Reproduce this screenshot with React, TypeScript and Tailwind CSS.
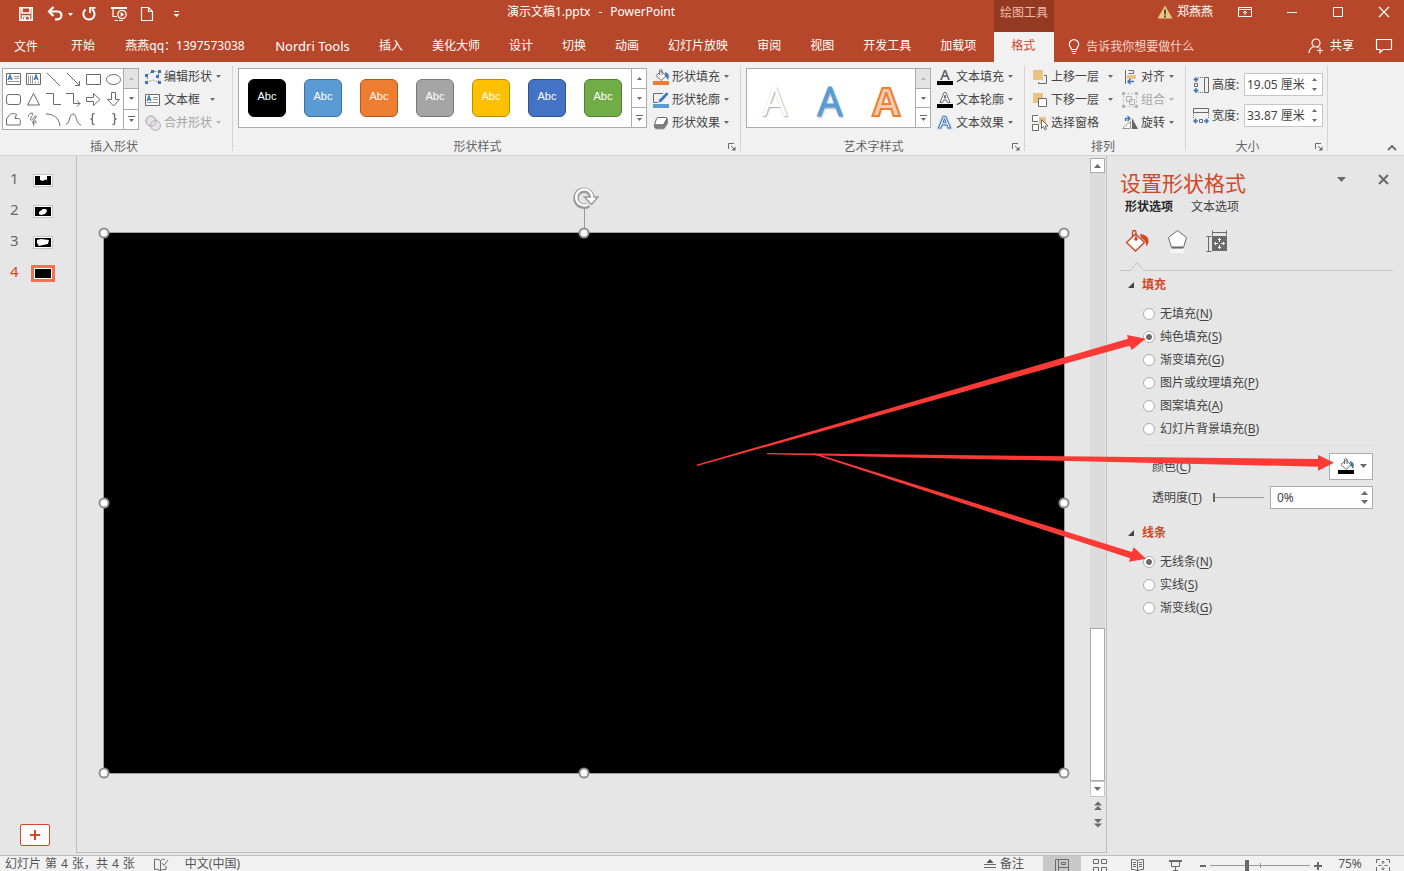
import React from "react";

type Kids = { children?: React.ReactNode };

const Ico = ({ w = 16, h = 16, children }: Kids & { w?: number; h?: number }) => (
  <svg width={w} height={h} viewBox={`0 0 ${w} ${h}`} fill="none" stroke="#6a6a6a" className="shrink-0" aria-hidden="true">
    {children}
  </svg>
);

const Caret = ({ color = "#6a6a6a", up = false }: { color?: string; up?: boolean }) => (
  <svg width="5" height="3" viewBox="0 0 5 3" className="shrink-0" aria-hidden="true">
    <path d={up ? "M0 3h5L2.5 0z" : "M0 0h5L2.5 3z"} fill={color} />
  </svg>
);

const letterA = "M1.5 13 6.3 1.5h2.4L13.5 13h-2.3l-1.2-3.2H5L3.8 13zM5.8 7.8h3.4L7.5 3.4z";

/* ---------- title bar ---------- */

function TitleBar() {
  return (
    <header className="flex h-8 shrink-0 text-white">
      <div className="flex shrink-0 items-start pt-[6px] pr-[8px] pl-[18px]">
        <button aria-label="保存"><Ico>
          <g stroke="#fff" strokeWidth="1.6"><path d="M1.8 1.8h12.4v12.4H1.8z" /><path d="M4 2v5h8V2M4.5 14v-4h7v4" /></g><path d="M6 11h2v3H6z" fill="#fff" stroke="none" />
        </Ico></button>
        <button aria-label="撤消" className="ml-[13px] flex items-center gap-[4px]">
          <Ico w={17}><path d="M2 5.500h8.500a3.900 3.900 0 0 1 0 7.800H8" stroke="#fff" strokeWidth="2.200" /><path d="M6.500 1 2 5.500l4.500 4.500" stroke="#fff" strokeWidth="2.200" /></Ico>
          <Caret color="#fff" />
        </button>
        <button aria-label="恢复" className="ml-[8px]"><Ico>
          <path d="M4.600 3.500a5.600 5.600 0 1 0 6.400-.2" stroke="#fff" strokeWidth="2" /><path d="M9 7V1.800h5.500" stroke="#fff" strokeWidth="1.800" />
        </Ico></button>
        <button aria-label="从头开始" className="ml-[13px]"><Ico w={18}>
          <g stroke="#fff" strokeWidth="1.200"><path d="M1 2h16" strokeWidth="2" /><path d="M3 3v7.500h4M8 14.500H4.500M9 14.500h4" /><circle cx="12" cy="8.500" r="4.200" /></g><path d="M10.700 6v5l3.600-2.500z" fill="#fff" stroke="none" />
        </Ico></button>
        <button aria-label="新建" className="ml-[12px]"><Ico>
          <path d="M1.500 1.500H8.500L12.500 5.500v9h-11zM8.500 1.500V5.500h4" stroke="#fff" strokeWidth="1.200" />
        </Ico></button>
        <button aria-label="自定义快速访问工具栏" className="ml-[17px]"><Ico w={7}>
          <path d="M1 5.500h5" stroke="#fff" /><path d="M.5 8h6l-3 3z" fill="#fff" stroke="none" />
        </Ico></button>
      </div>
      <h1 className="flex h-6 min-w-0 flex-1 items-center justify-center gap-[8px] text-[12px] leading-4 whitespace-nowrap">
        <span>演示文稿1.pptx</span><span>-</span><span>PowerPoint</span>
      </h1>
      <div className="flex shrink-0">
        <div className="mr-[103px] flex w-[60px] justify-center bg-[#943a22] pt-[5px] text-[12px] leading-4 text-[#f0b9a8]">绘图工具</div>
        <div className="flex h-6 items-center gap-1 text-[12px] leading-4">
          <Ico><path d="M8 1.500 15.500 14.500H.5z" fill="#efc77c" stroke="none" /><path d="M8 5.500v5M8 11.500v2" stroke="#444" strokeWidth="1.800" /></Ico>
          郑燕燕
        </div>
        <button aria-label="功能区显示选项" className="ml-[25px] h-6"><Ico w={14}><path d="M.5 3.500h13v9H.5zM.5 5.500h13M7 11V7M5 9l2-2 2 2" stroke="#fff" /></Ico></button>
        <button aria-label="最小化" className="ml-[34px] h-6"><Ico w={12}><path d="M1 8.500h10" stroke="#fff" /></Ico></button>
        <button aria-label="最大化" className="ml-[35px] h-6"><Ico w={11}><path d="M.5 3.500h9v9h-9z" stroke="#fff" /></Ico></button>
        <button aria-label="关闭" className="mr-[14px] ml-[34px] h-6"><Ico w={12}><path d="m1 3 10 10M11 3 1 13" stroke="#fff" strokeWidth="1.200" /></Ico></button>
      </div>
    </header>
  );
}

function Tabs() {
  const tab = "flex items-center justify-center px-[14px] whitespace-nowrap";
  return (
    <nav className="flex h-[30px] shrink-0 text-[12px] leading-4 text-white">
      <button className="flex items-center pr-[19px] pl-[14px]">文件</button>
      <div className="flex gap-px pb-[2px]">
        <button className={tab}>开始</button>
        <button className="flex w-[150px] items-center justify-center whitespace-nowrap">燕燕qq：1397573038</button>
        <button className="flex w-[103px] items-center justify-center text-[13px] whitespace-nowrap">Nordri Tools</button>
        {["插入", "美化大师", "设计", "切换", "动画", "幻灯片放映", "审阅", "视图", "开发工具", "加载项"].map((t) => (
          <button key={t} className={tab}>{t}</button>
        ))}
      </div>
      <button className="ml-1 w-[60px] bg-[#f1f1f1] pr-[2px] pb-[2px] text-[#d24726]">格式</button>
      <button className="flex items-center gap-1 pl-3 text-[#f7d5cb]">
        <Ico><path d="M5.500 10.500C5.500 9 3.300 8 3.300 5.300a4.700 4.700 0 0 1 9.400 0C12.700 8 10.500 9 10.500 10.500zM5.500 12.500h5M6.500 14.500h3" stroke="#fff" strokeWidth="1.200" /></Ico>
        告诉我你想要做什么
      </button>
      <button className="ml-auto flex items-center gap-[6px] pb-[2px]">
        <Ico><g stroke="#fff" strokeWidth="1.200"><circle cx="8" cy="5" r="4" /><path d="M1 15c.3-3.500 2-5.500 4.500-6.300M12 9.500v6M9 12.500h6M9.500 9l1 .7" /></g></Ico>
        共享
      </button>
      <button aria-label="批注" className="mr-[11px] ml-[21px] pb-[2px]"><Ico w={18}><path d="M1.500 1.500h15v10H8l-3 3v-3H1.500z" stroke="#fff" strokeWidth="1.200" /></Ico></button>
    </nav>
  );
}

/* ---------- ribbon ---------- */

function Scroller({ dim = false }: { dim?: boolean }) {
  return (
    <div className="flex w-[15px] shrink-0 flex-col divide-y divide-[#ababab] border-l border-[#ababab]">
      <button aria-label="上一行" className={`flex flex-1 items-center justify-center ${dim ? "bg-[#e3e3e3]" : ""}`}><Caret up color={dim ? "#b5b5b5" : "#6a6a6a"} /></button>
      <button aria-label="下一行" className="flex flex-1 items-center justify-center"><Caret /></button>
      <button aria-label="其他" className="flex flex-1 flex-col items-center justify-center gap-[2px]"><span className="h-px w-[7px] bg-[#6a6a6a]" /><Caret /></button>
    </div>
  );
}

function Cmd({ icon, text, caret = true, off = false, gap = "gap-[4px]" }: { icon: React.ReactNode; text: string; caret?: boolean; off?: boolean; gap?: string }) {
  return (
    <button disabled={off} className={`flex h-[23px] items-center whitespace-nowrap ${off ? "text-[#a6a6a6]" : "text-[#444]"}`}>
      {icon}
      <span className={`ml-[3px] flex items-center ${gap}`}>{text}{caret && <Caret color={off ? "#b5b5b5" : "#6a6a6a"} />}</span>
    </button>
  );
}

function Group({ label, w, launcher, children }: Kids & { label: string; w: string; launcher?: boolean }) {
  return (
    <section className={`flex shrink-0 flex-col pt-[3px] ${w}`}>
      <div className="flex h-[74px]">{children}</div>
      <div className="flex items-start leading-4 text-[#666]">
        <span className={`flex-1 text-center ${launcher ? "pr-[2px]" : "pr-1"}`}>{label}</span>
        {launcher && (
          <button aria-label={`${label}设置`} className="mx-1 pt-[2px]">
            <Ico w={8} h={11}><path d="M.5 8V2.500H6M3 5l3 3" /><path d="M7.500 5.500v4h-4z" fill="#6a6a6a" stroke="none" /></Ico>
          </button>
        )}
      </div>
    </section>
  );
}
const Sep = () => <div className="my-1 w-px shrink-0 bg-[#d4d4d4]" />;

const TextBoxIcon = () => (
  <Ico><path d="M.5 2.500h14v11H.5z" fill="#fff" /><path d="m2 9 2-5 2 5M3 7.500h2" stroke="#3e75b5" strokeWidth="1.300" /><path d="M8 5.500h5M8 7.500h5M2 10.500h11" stroke="#999" /></Ico>
);

const shapes: React.ReactNode[] = [
  <><path d="M.5 1.500h14v11H.5z" /><path d="m2 8 2-5 2 5M3 6.500h2" stroke="#3e75b5" strokeWidth="1.300" /><path d="M8 4.500h5M8 6.500h5M2 9.500h11" stroke="#999" /></>,
  <><path d="M.5 1.500h14v11H.5z" /><path d="m8 8 2-5 2 5M9 6.500h2" stroke="#3e75b5" strokeWidth="1.300" /><path d="M2.500 3.500v8M4.500 3.500v8M6.500 3.500v8M9.500 9.500v2M12.500 9.500v2" stroke="#999" /></>,
  <path d="m1 1 13 13" />,
  <><path d="m1 1 12 12" /><path d="M13.500 9v4.500H9" /></>,
  <path d="M.5 2.500h14v10H.5z" />,
  <ellipse cx="7.500" cy="7.500" rx="7" ry="5" />,
  <rect x=".5" y="2.500" width="14" height="10" rx="2.500" />,
  <path d="M7.500 1.500 13.500 13H1.500z" />,
  <path d="M0 1.500h7.500v11H15" />,
  <path d="M0 1.500h7.500v10H14M11 8.500l3 3-3 3" />,
  <path d="M.5 5.500h7v-4l6.500 6-6.500 6v-4h-7z" />,
  <path d="M5.500 .5v7h-4l6 6.500 6-6.500h-4v-7z" />,
  <path d="M3 3.500C4.500 1 8 1 10.500 2.500L9 6.500h3.500c2.500 1 2 4 1.500 6.500H.5V7z" />,
  <path d="M3 5C1 4 4 1 6 1c3 0-3 6-1 7s4-6 5-4-5 6-3 7 4-1 3-2-4 1-2 5" />,
  <path d="M0 2c8 0 13 4 14 12" />,
  <path d="M0 12C4 12 3 2 7 2s3 11 8 11" />,
  <path d="M8.500 1.500c-3 0-2 2-2 4 0 1-1 1.500-2 1.500 1 0 2 .5 2 1.500 0 2-1 4 2 4" strokeWidth="1.300" />,
  <path d="M6.500 1.500c3 0 2 2 2 4 0 1 1 1.500 2 1.500-1 0-2 .5-2 1.500 0 2 1 4-2 4" strokeWidth="1.300" />,
];

const styles = [
  "bg-black border-black", "bg-[#5b9bd5] border-[#41719c]", "bg-[#ed7d31] border-[#ae5a21]", "bg-[#a5a5a5] border-[#787878]",
  "bg-[#ffc000] border-[#bc8c00]", "bg-[#4472c4] border-[#2f528f]", "bg-[#70ad47] border-[#507e32]",
];

const Bucket = ({ bar }: { bar: string }) => (
  <Ico>
    <path d="M12 3c4 1 4.500 4 3 8l-2.500-4z" fill="#3e75b5" stroke="none" />
    <path d="M3 6.500 8.500 2l4.500 5-5 4.500z" fill="#fff" /><path d="M6.500 6V1.500c0-1.500 2.500-1.500 2.500 0V6" />
    <path d="M0 12h16v4H0z" fill={bar} stroke="none" />
  </Ico>
);

function SizeField({ id, label, value, icon }: { id: string; label: string; value: string; icon: React.ReactNode }) {
  return (
    <div className="flex h-[23px] items-center">
      {icon}
      <label htmlFor={id} className="ml-[3px] w-[32px] whitespace-nowrap">{label}:</label>
      <div className="flex h-[23px] w-[79px] border border-[#c6c6c6] bg-white">
        <input id={id} defaultValue={value} className="w-[62px] pl-[2px] outline-none" />
        <div className="flex w-4 flex-col items-center justify-center gap-[7px]"><button aria-label="增大"><Caret up /></button><button aria-label="减小"><Caret /></button></div>
      </div>
    </div>
  );
}

function Ribbon() {
  return (
    <div className="flex h-[94px] shrink-0 border-b border-[#d2d2d2] bg-[#f1f1f1] text-[12px] leading-4 text-[#444]">
      <Group label="插入形状" w="w-[232px]">
        <div className="mt-[3px] ml-[2px] flex h-[62px] w-[137px] border border-[#ababab] bg-white">
          <div className="grid flex-1 grid-cols-6 grid-rows-3 place-items-center">
            {shapes.map((s, i) => <button key={i} aria-label={`形状 ${i + 1}`}><Ico w={15} h={15}>{s}</Ico></button>)}
          </div>
          <Scroller dim />
        </div>
        <div className="ml-[6px] flex flex-col">
          <Cmd text="编辑形状" icon={<Ico><path d="M2 6.500 7 2.500M9 2.500h4M2.500 8v5l6-2 5 2.500V4" stroke="#888" strokeDasharray="2 1.500" /><path d="M0 5h3v3H0zM6 1h3v3H6zM13 1h3v3h-3zM0 12h3v3H0zM11 6h3v3h-3zM13 12h3v3h-3z" fill="#3e75b5" stroke="none" /></Ico>} />
          <Cmd text="文本框" gap="gap-[10px]" icon={<TextBoxIcon />} />
          <Cmd text="合并形状" off icon={<Ico><g stroke="#b8b0b4" fill="#e9e2e8"><circle cx="6" cy="6" r="5" /><circle cx="10.500" cy="10.500" r="5" /><circle cx="6" cy="6" r="5" fill="none" /></g></Ico>} />
        </div>
      </Group>
      <Sep />
      <Group label="形状样式" w="w-[507px]" launcher>
        <div className="mt-[3px] ml-[5px] flex h-[60px] w-[409px] shrink-0 border border-[#ababab] bg-white">
          <div className="flex flex-1 items-center gap-[18px] pl-[9px]">
            {styles.map((s) => (
              <button key={s} className={`flex size-[38px] items-center justify-center rounded-[6px] border pb-[4px] font-['Liberation_Sans',sans-serif] text-[11px] text-white ${s}`}>Abc</button>
            ))}
          </div>
          <Scroller />
        </div>
        <div className="ml-[6px] flex flex-col">
          <Cmd text="形状填充" icon={<Bucket bar="#ed7d31" />} />
          <Cmd text="形状轮廓" icon={<Ico><path d="M10 1.500H.5v9H5" /><path d="m5 11 1-3.500L13.500 0 16 2 8.500 10z" fill="#3e75b5" stroke="#fff" strokeWidth=".6" /><path d="M0 12h16v4H0z" fill="#5b9bd5" stroke="none" /></Ico>} />
          <Cmd text="形状效果" icon={<Ico><path d="M5 4h10v5l-4 5.500H2.500z" fill="#aaa" stroke="none" /><path d="M4.500 2.500h8.500c1 0 1 1 .5 2L10.500 10H1.500L3.500 3.500z" fill="#fff" /><path d="M10.500 10 14 3.500V8l-3 5H2.500c-1 0-1-1-1-3z" fill="#888" /></Ico>} />
        </div>
      </Group>
      <Sep />
      <Group label="艺术字样式" w="w-[283px]" launcher>
        <div className="mt-[3px] ml-[5px] flex h-[60px] w-[185px] shrink-0 border border-[#ababab] bg-white">
          <div className="flex flex-1 items-center justify-around pt-[5px] font-['Open_Sans',sans-serif] text-[40px] leading-[40px]">
            <button className="text-white [text-shadow:1px_1px_1px_#aaa,0_0_1px_#ccc]">A</button>
            <button className="text-[#5b9bd5] [text-shadow:1px_2px_2px_#bbb] [-webkit-text-stroke:1px_#5b9bd5]">A</button>
            <button className="font-bold text-[#f8cbad] [-webkit-text-stroke:2px_#ed7d31]">A</button>
          </div>
          <Scroller dim />
        </div>
        <div className="ml-[6px] flex flex-col">
          <Cmd text="文本填充" icon={<Ico><path d="M3 11 7 1h2l4 10h-2l-1-3H6l-1 3zM6.600 6.300h2.800L8 3z" fill="#666" stroke="none" /><path d="M0 12h16v4H0z" fill="#000" stroke="none" /></Ico>} />
          <Cmd text="文本轮廓" icon={<Ico><path d="M3 10.500 7 .5h2l4 10h-2.500l-1-2.500h-3l-1 2.500zM7 6h2L8 3z" fill="#fff" /><path d="M0 12h16v4H0z" fill="#000" stroke="none" /></Ico>} />
          <Cmd text="文本效果" icon={<Ico><path d={letterA} stroke="#b5cfec" strokeWidth="3" /><path d={letterA} fill="#fff" stroke="#3e75b5" /></Ico>} />
        </div>
      </Group>
      <Sep />
      <Group label="排列" w="w-[160px]">
        <div className="ml-[7px] flex flex-col">
          <Cmd text="上移一层" gap="gap-[9px]" icon={<Ico><path d="M1 1h10v10H1z" fill="#eac282" stroke="none" /><path d="M12 6.500h2.500v8H6.500V13" /></Ico>} />
          <Cmd text="下移一层" gap="gap-[9px]" icon={<Ico><path d="M1 1h10v10H1z" fill="#eac282" stroke="none" /><path d="M6.500 6.500h8v8h-8z" fill="#fff" /></Ico>} />
          <Cmd text="选择窗格" caret={false} icon={<Ico><path d="M7 2h7v7H7z" fill="#eac282" stroke="none" /><path d="M6 .5H.5v6H6M.5 9.500h6v6h-6z" fill="#fff" /><path d="M9.500 4.500v9l2-2 1.500 3.500 1.500-1-1.500-3h3z" fill="#fff" /></Ico>} />
        </div>
        <div className="ml-[9px] flex flex-col">
          <Cmd text="对齐" icon={<Ico><path d="M3.500 1v14M6.500 1.500h5v3h-5" /><path d="M5 6h9v4H5z" fill="#eac282" stroke="none" /><path d="M12 12.500H6M8.500 10l-2.500 2.500L8.500 15" stroke="#3e75b5" strokeWidth="1.500" /></Ico>} />
          <Cmd text="组合" off icon={<Ico><path d="M1.500 1.500h13v13h-13z" stroke="#bbb" strokeDasharray="2 2" /><path d="M4.500 4.500h5v5h-5zM7.500 7.500h5v5h-5z" stroke="#b0b0b0" /><path d="M0 0h3v3H0zM13 0h3v3h-3zM0 13h3v3H0zM13 13h3v3h-3z" fill="#b5b5b5" stroke="none" /></Ico>} />
          <Cmd text="旋转" icon={<Ico><path d="M8.500 6.500v7h-8z" fill="#fff" stroke="#999" /><path d="M10 3v11h6z" fill="#666" stroke="none" /><path d="M3.500 6V3.500H7M5.500 1l2.500 2.500L5.500 6" stroke="#3e75b5" strokeWidth="1.300" /></Ico>} />
        </div>
      </Group>
      <Sep />
      <Group label="大小" w="w-[141px]" launcher>
        <div className="ml-[7px] flex flex-col gap-2 pt-2">
          <SizeField id="height" label="高度" value="19.05 厘米" icon={<Ico><path d="M11.500 .5h4v15h-4z" /><path d="M5 .5h6M5 15.500h6" strokeDasharray="1 1" /><path d="M1.500 6.500h3v3h-3z" /><path d="M3 5V1M.8 3.200 3 1l2.200 2.200M3 11v4M.8 12.800 3 15l2.200-2.200" stroke="#3e75b5" strokeWidth="1.500" /></Ico>} />
          <SizeField id="width" label="宽度" value="33.87 厘米" icon={<Ico><path d="M.5 .5h15v4H.5z" /><path d="M.5 5v6M15.500 5v6" strokeDasharray="1 1" /><path d="M6.500 11.500h3v3h-3z" /><path d="M5 13H1M3.200 10.800 1 13l2.200 2.200M11 13h4M12.800 10.800 15 13l-2.200 2.200" stroke="#3e75b5" strokeWidth="1.500" /></Ico>} />
        </div>
      </Group>
      <Sep />
      <button aria-label="折叠功能区" className="mt-auto mr-[7px] mb-[2px] ml-auto"><Ico w={10} h={10}><path d="m1 7 4-4 4 4" strokeWidth="1.800" /></Ico></button>
    </div>
  );
}

/* ---------- slide list and canvas ---------- */

const thumbs: React.ReactNode[] = [
  <path d="M5 0h7v4l-2-.5L8 5 5 4z" />,
  <path d="M4 5l4-3h3l1 2-2 3-4 1-2-1z" />,
  <path d="M2 2l4-1 8 1-1 4-5 1-4 1-2-3z" />,
  null,
];

function SlideList() {
  return (
    <aside className="mb-[2px] flex w-[77px] shrink-0 flex-col border-r border-[#bebebe]">
      <ol className="flex flex-col pt-[9px]">
        {thumbs.map((t, i) => (
          <li key={i}>
            <button className={`flex h-[31px] w-full items-center pl-[10px] text-[15px] leading-5 ${i === 3 ? "text-[#d24726]" : "text-[#666]"}`}>
              <span className="w-[21px] pb-[5px] text-left">{i + 1}</span>
              <span className={`flex ${i === 3 ? "border-[3px] border-[#f4704e]" : "m-[2px] border border-[#c6c6c6]"}`}>
                <svg width="18" height="11" viewBox="-1 -1 18 11" aria-hidden="true"><path d="M-1-1h18v11H-1z" fill="#fff" /><path d="M0 0h16v9H0z" /><g fill="#fff">{t}</g></svg>
              </span>
            </button>
          </li>
        ))}
      </ol>
      <button aria-label="新建幻灯片" className="mt-auto mb-[7px] ml-[20px] flex h-[22px] w-[30px] items-center justify-center rounded-[2px] border border-[#d24726] bg-white">
        <Ico w={12} h={12}><path d="M6 1v10M1 6h10" stroke="#d24726" strokeWidth="2" /></Ico>
      </button>
    </aside>
  );
}

const handles = [
  "top-0 left-0", "top-0 left-1/2", "top-0 left-full", "top-1/2 left-0", "top-1/2 left-full",
  "top-full left-0", "top-full left-1/2", "top-full left-full",
];

function Canvas() {
  return (
    <div className="mb-[2px] flex min-w-0 flex-1 border-r border-b border-[#bebebe]">
      <div className="flex min-w-0 flex-1 items-center justify-center pr-[25px] pb-[2px] pl-[26px]">
        <div className="relative aspect-[961/541] w-full border border-[#a0a0a0] bg-black">
          <svg width="27" height="46" viewBox="0 0 27 46" fill="none" className="absolute -top-[47px] left-1/2 -ml-[12px]" aria-hidden="true">
            <path d="M12.500 20v26" stroke="#999" />
            <circle cx="12" cy="11.500" r="10" fill="#e6e6e6" stroke="none" />
            <path d="M16.500 18.900A8 8 0 1 1 20 11.500" stroke="#999" strokeWidth="5.500" />
            <path d="M12.500 11h13.500L19.500 18.500z" fill="#fff" stroke="#999" strokeWidth="1.500" />
            <path d="M16 18.400A8 8 0 1 1 20 13" stroke="#fff" strokeWidth="2.400" />
          </svg>
          {handles.map((h) => <span key={h} className={`absolute size-[11px] -translate-1/2 rounded-full border-2 border-[#919191] bg-white ${h}`} />)}
        </div>
      </div>
      <div className="flex w-[16px] shrink-0 flex-col pt-[2px] pb-6">
        <div className="flex w-[15px] flex-1 flex-col bg-[#dbdbdb]">
          <button aria-label="向上滚动" className="flex h-[15px] items-center justify-center border border-[#ababab] bg-white"><svg width="7" height="4"><path d="M0 4h7L3.500 0z" fill="#6a6a6a" /></svg></button>
          <div className="flex-[3]" />
          <div className="flex-1 border border-[#ababab] bg-white" />
          <button aria-label="向下滚动" className="flex h-[16px] items-center justify-center border border-[#c6c6c6] bg-white"><svg width="7" height="4"><path d="M0 0h7L3.500 4z" fill="#6a6a6a" /></svg></button>
        </div>
        <div className="flex w-[15px] flex-col items-center gap-[9px] pt-1">
          <button aria-label="上一张幻灯片"><Ico w={8} h={9}><path d="M0 4.500h8L4 .5zM0 9h8L4 5z" fill="#6a6a6a" stroke="none" /></Ico></button>
          <button aria-label="下一张幻灯片"><Ico w={8} h={9}><path d="M0 0h8L4 4zM0 4.500h8L4 8.500z" fill="#6a6a6a" stroke="none" /></Ico></button>
        </div>
      </div>
    </div>
  );
}

/* ---------- format pane ---------- */

const radioCls = "size-[12px] appearance-none rounded-full border border-[#ababab] bg-white checked:bg-[radial-gradient(circle,#6a6a6a_2.5px,#fff_3.5px)]";

function Radios({ name, items, picked }: { name: string; items: [string, string][]; picked: number }) {
  return (
    <div className="flex flex-col pl-[36px]">
      {items.map(([t, k], i) => (
        <label key={t} className="flex h-[23px] items-center gap-[5px]">
          <input type="radio" name={name} defaultChecked={i === picked} className={radioCls} />
          <span>{t}(<u className="underline-offset-2">{k}</u>)</span>
        </label>
      ))}
    </div>
  );
}

const Heading = ({ children }: Kids) => (
  <h3 className="flex h-4 items-center gap-[8px] pl-[21px] font-bold text-[#d24726]">
    <svg width="6" height="6" aria-hidden="true"><path d="M6 0v6H0z" fill="#444" /></svg>
    {children}
  </h3>
);

function FormatPane() {
  return (
    <aside className="w-[297px] shrink-0 text-[12px] leading-4 text-[#444]">
      <div className="flex h-[43px] items-center pt-[10px] pr-[15px] pl-[13px]">
        <h2 className="flex-1 text-[21px] leading-6 text-[#d24726]">设置形状格式</h2>
        <button aria-label="任务窗格选项" className="mb-[7px]"><svg width="9" height="5"><path d="M0 0h9L4.500 5z" fill="#6a6a6a" /></svg></button>
        <button aria-label="关闭窗格" className="mb-[7px] ml-[32px]"><Ico w={11} h={11}><path d="m1 1 9 9M10 1l-9 9" strokeWidth="2" /></Ico></button>
      </div>
      <div className="flex gap-[18px] pl-[18px]">
        <button className="font-bold text-[#262626]">形状选项</button>
        <button>文本选项</button>
      </div>
      <div className="flex gap-[15px] pt-[14px] pl-[18px]">
        <button aria-label="填充与线条"><Ico w={25} h={25}>
          <path d="M15 5c8 1 11 6 6.500 12.500C21 13 20 11 16 9z" fill="#d24726" stroke="none" /><path d="m1.500 13.500 9-8.500 9 8.500-9 8.500z" fill="#fff" stroke="#d24726" strokeWidth="1.400" /><path d="M7.500 8V3c0-2 3.500-2 3.500 0v7" stroke="#d24726" strokeWidth="1.300" /><circle cx="11" cy="10" r="1.800" fill="#d24726" stroke="none" />
        </Ico></button>
        <button aria-label="效果"><Ico w={25} h={25}>
          <path d="m12.500 1.500 9 7-3 10h-12l-3-10z" fill="#fff" /><path d="M7 18.500h11" strokeWidth="2" /><path d="M6.500 20h12l1.500 4H5z" fill="#f6f6f6" stroke="none" />
        </Ico></button>
        <button aria-label="大小与属性"><Ico w={25} h={25}>
          <path d="M7 7h15v15H7z" fill="#6a6a6a" stroke="none" /><path d="M7.500 1.500v5M21.500 1.500v5M8 3.500h14M1.500 7.500h5M1.500 22.500h5M3.500 8v14" /><path d="M14.500 9v11M9 14.500h11M13 11l1.500-1.500L16 11M13 18l1.500 1.500L16 18M11 13l-1.500 1.500L11 16M18 13l1.500 1.500L18 16" stroke="#fff" /><path d="M13 13h3v3h-3z" fill="#6a6a6a" stroke="none" />
        </Ico></button>
      </div>
      <div className="mt-[7px] mr-[11px] ml-[13px] flex items-end">
        <svg width="24" height="10" fill="none" stroke="#c2c2c2" aria-hidden="true"><path d="M0 9.500h10.500l6.500-8 6.500 8" /></svg>
        <span className="h-px flex-1 bg-[#c6c6c6]" />
      </div>
      <div className="pt-[6px]">
        <Heading>填充</Heading>
        <div className="pt-[9px]">
          <Radios name="fill" picked={1} items={[["无填充", "N"], ["纯色填充", "S"], ["渐变填充", "G"], ["图片或纹理填充", "P"], ["图案填充", "A"], ["幻灯片背景填充", "B"]]} />
        </div>
        <div className="mt-[5px] mr-[31px] ml-[35px] border-t border-[#dcdcdc] pt-[7px] pl-[10px]">
          <div className="flex h-[27px] items-center justify-between">
            <span>颜色(<u className="underline-offset-2">C</u>)</span>
            <button aria-label="填充颜色" className="flex h-[27px] w-[44px] items-center justify-center gap-[6px] border border-[#ababab] bg-white pb-[2px] pl-[2px]">
              <Bucket bar="#000" /><svg width="7" height="4"><path d="M0 0h7L3.500 4z" fill="#6a6a6a" /></svg>
            </button>
          </div>
          <div className="mt-[6px] flex h-[23px] items-center">
            <label htmlFor="alpha">透明度(<u className="underline-offset-2">T</u>)</label>
            <input id="alpha" type="range" defaultValue={0} className="ml-auto h-[9px] w-[51px] appearance-none bg-[linear-gradient(#999,#999)] bg-[length:100%_1px] bg-center bg-no-repeat [&::-webkit-slider-thumb]:h-[9px] [&::-webkit-slider-thumb]:w-[2px] [&::-webkit-slider-thumb]:appearance-none [&::-webkit-slider-thumb]:bg-[#6a6a6a]" />
            <div className="ml-[6px] flex h-[23px] w-[103px] border border-[#ababab] bg-white">
              <input aria-label="透明度百分比" defaultValue="0%" className="w-[85px] pl-[6px] outline-none" />
              <div className="flex w-4 flex-col items-center justify-center gap-[5px]">
                <button aria-label="增大"><svg width="7" height="4" className="block"><path d="M0 4h7L3.500 0z" fill="#6a6a6a" /></svg></button>
                <button aria-label="减小"><svg width="7" height="4" className="block"><path d="M0 0h7L3.500 4z" fill="#6a6a6a" /></svg></button>
              </div>
            </div>
          </div>
        </div>
      </div>
      <div className="pt-4">
        <Heading>线条</Heading>
        <div className="pt-[9px]">
          <Radios name="line" picked={0} items={[["无线条", "N"], ["实线", "S"], ["渐变线", "G"]]} />
        </div>
      </div>
    </aside>
  );
}

function Arrows() {
  return (
    <svg width="708" height="480" viewBox="696 156 708 480" fill="#fd3a36" className="pointer-events-none absolute top-0 right-0" aria-hidden="true">
      <path d="M696.500 464.800 1128 338.700 1127 335 1145.700 338.700 1131.700 350 1129.700 345.700 697 466z" />
      <path d="M767 453 1318 459v-4l16 7.700-16 8v-4L767 454.200z" />
      <path d="M814 453 1132 552l1.700-4.700 12.300 11.400-17 3 1-3.500L814 454.500z" />
    </svg>
  );
}

/* ---------- status bar ---------- */

function StatusBar() {
  return (
    <footer className="h-4 shrink-0 border-t border-[#bebebe] bg-[#f1f1f1] text-[12px] leading-[14px] text-[#555]">
      <div className="flex h-[15px] items-end">
        <span className="flex gap-1 pl-[5px]"><span>幻灯片</span><span>第</span><span>4</span><span>张，共</span><span>4</span><span>张</span></span>
        <button aria-label="拼写检查" className="ml-[18px] self-start"><Ico><path d="M7.500 15V4.500C5.500 3 3.500 3 1.500 3.500v10c2-.5 4-.5 6 1.500 1.500-1.500 3-2 5.500-1.500V10M7.500 4.500C9 3.500 10 3 12 3.500M9 7l2 2.500L15 4" /></Ico></button>
        <button className="ml-[16px]">中文(中国)</button>
        <span className="flex-1" />
        <button className="flex items-end gap-[4px]"><Ico w={12} h={14}><path d="M0 7.500h12M0 10.500h12" /><path d="M2.500 6h7L6 2z" fill="#555" stroke="none" /></Ico>备注</button>
        <div className="flex items-start self-start">
          <button aria-label="普通视图" className="ml-[19px] flex h-[15px] w-[38px] items-start justify-center bg-[#c8c8c8]"><Ico><path d="M1.500 3.500h13v13h-13zM4.500 3.500v12M7.500 6.500h4v2h-4zM4.500 11.500h10" /></Ico></button>
          <button aria-label="幻灯片浏览" className="ml-[11px]"><Ico><path d="M1.500 3.500h5v4h-5zM9.500 3.500h5v4h-5zM1.500 11.500h5v4h-5zM9.500 11.500h5v4h-5z" /></Ico></button>
          <button aria-label="阅读视图" className="ml-[22px]"><Ico><path d="M7.500 4.500c-2-1-4-1-6-1v10c2 0 4 0 6 1.500 2-1.500 4-1.500 6-1.500v-10c-2 0-4 0-6 1zM7.500 4.500V15M3 6.500h3M3 8.500h3M3 10.500h3M9 6.500h3M9 8.500h3M9 10.500h3" /></Ico></button>
          <button aria-label="幻灯片放映" className="ml-[22px]"><Ico><path d="M1 5h13" strokeWidth="2" /><path d="M3.500 6v4.500h8V6M7.500 11v3M5 14.500h5" /></Ico></button>
        </div>
        <div className="ml-[15px] flex h-[19px] items-center self-start">
          <button aria-label="缩小"><Ico w={8}><path d="M1 8h6" strokeWidth="2" /></Ico></button>
          <input aria-label="显示比例" type="range" min={0} max={100} defaultValue={36} className="ml-[3px] h-[12px] w-[100px] appearance-none bg-[linear-gradient(#999,#999),linear-gradient(#999,#999)] bg-[length:100%_1px,1px_5px] bg-center bg-no-repeat [&::-webkit-slider-thumb]:h-[12px] [&::-webkit-slider-thumb]:w-[4px] [&::-webkit-slider-thumb]:appearance-none [&::-webkit-slider-thumb]:bg-[#6a6a6a]" />
          <button aria-label="放大" className="ml-[4px]"><Ico w={8}><path d="M0 8h8M4 4v8" strokeWidth="2" /></Ico></button>
        </div>
        <button className="ml-[15px] w-[26px] text-center">75%</button>
        <button aria-label="适应窗口" className="mr-[14px] ml-[13px] self-start"><Ico w={14}><path d="M.5 7V3.500H4M10 3.500h3.500V7M.5 11v4.500H4M10 15.500h3.500V11M7 5v3M5.500 6.500 7 5l1.500 1.500M7 14v-3M5.500 12.500 7 14l1.500-1.500M2.500 9.500h3M8.500 9.500h3" /></Ico></button>
      </div>
    </footer>
  );
}

export default function App() {
  return (
    <div className="flex h-screen flex-col overflow-hidden bg-[#b7472a] font-['Noto_Sans','Noto_Sans_CJK_SC',sans-serif]">
      <TitleBar />
      <Tabs />
      <Ribbon />
      <main className="relative flex min-h-0 flex-1 bg-[#e6e6e6]">
        <SlideList />
        <Canvas />
        <FormatPane />
        <Arrows />
      </main>
      <StatusBar />
    </div>
  );
}
